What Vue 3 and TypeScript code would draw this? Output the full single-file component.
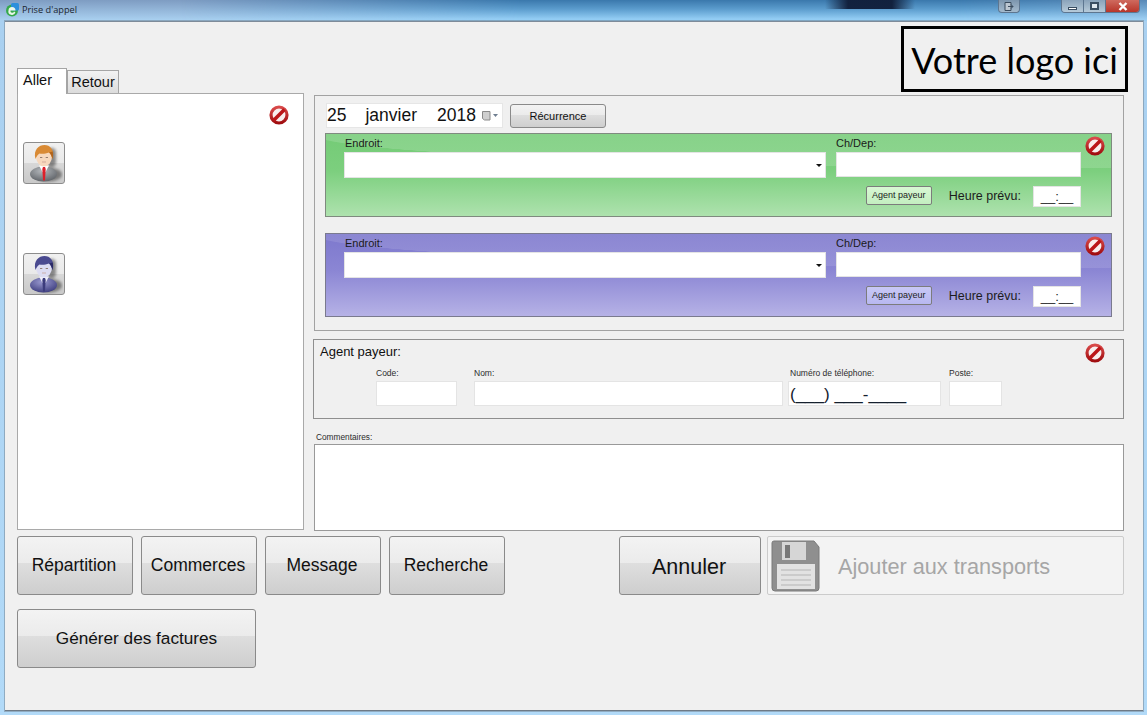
<script setup lang="ts">
interface Stop { cls: string }
const stops: Stop[] = [{ cls: 'green' }, { cls: 'purple' }]
const people = [
  { id: 'a', hair: '#d98a34', hairDark: '#b2651d', skin: '#f7d8bd', suit: '#b4b8bc', suitDark: '#5c6065', shirt: '#ffffff', tie: '#dd1f2a', gap: 'first' },
  { id: 'b', hair: '#4a4a90', hairDark: '#2b2b68', skin: '#dcdcf2', suit: '#9a9ad0', suitDark: '#3a3a7c', shirt: '#eeeefa', tie: '#3c3c7c', gap: 'second' },
]
const bottomLeft = ['Répartition', 'Commerces', 'Message', 'Recherche']
</script>

<template>
  <div class="desktop">
    <header class="titlebar">
      <svg class="app-icon" width="15" height="15" viewBox="0 0 15 15">
        <circle cx="7" cy="8.500" r="6" fill="#35a94b" />
        <rect x="6" y="1" width="8" height="7.500" rx="1.500" fill="#2c8fdc" />
        <path d="M3.500 8.500a3.500 3.500 0 0 1 7 0H5.500a1.800 1.800 0 0 0 3.500 1l1.400.8A3.500 3.500 0 0 1 3.500 8.500z" fill="#eaf7ea" />
      </svg>
      <span class="title">Prise d'appel</span>
      <div class="spacer"></div>
      <div class="cap helper">
        <svg width="10" height="9" viewBox="0 0 10 9">
          <path d="M1 .5h6v8H1z" fill="#bcc6d0" stroke="#3b4c5e" />
          <path d="M4 4.500h5M7 2.500l2 2-2 2" fill="none" stroke="#3b4c5e" />
        </svg>
      </div>
      <div class="caps">
        <div class="cap-b"><span class="min-glyph"></span></div>
        <div class="cap-b"><span class="max-glyph"></span></div>
        <div class="cap-b close">
          <svg width="10" height="9" viewBox="0 0 10 9">
            <path d="M1.500 1l7 7M8.500 1l-7 7" stroke="#fff" stroke-width="2.400" />
          </svg>
        </div>
      </div>
    </header>

    <main class="client">
      <div class="logo">Votre logo ici</div>

      <div class="columns">
        <section class="left">
          <div class="tabs">
            <div class="tab active">Aller</div>
            <div class="tab">Retour</div>
          </div>
          <div class="tab-panel">
            <svg class="ban left-ban" width="20" height="20" viewBox="0 0 20 20">
              <use href="#ban-shape" />
            </svg>
            <button v-for="p in people" :key="p.id" class="person" :class="p.gap">
              <svg width="38" height="38" viewBox="0 0 38 38">
                <defs>
                  <radialGradient :id="'suit-' + p.id" cx=".45" cy=".3" r=".75">
                    <stop offset="0" :stop-color="p.suit" />
                    <stop offset="1" :stop-color="p.suitDark" />
                  </radialGradient>
                </defs>
                <g filter="url(#soft)" fill="#000" opacity=".42">
                  <ellipse cx="23" cy="29.500" rx="14" ry="7" />
                  <rect x="22" y="3" width="9" height="19" rx="4.500" />
                </g>
                <ellipse cx="18.500" cy="29" rx="13.500" ry="7.500" :fill="'url(#suit-' + p.id + ')'" />
                <path d="M14 20.500h10l-3.500 6.500h-3z" :fill="p.shirt" />
                <path d="M18 22h2l.7 2-.7 11.500h-2l-.7-11.500z" :fill="p.tie" />
                <ellipse cx="19" cy="11.500" rx="8" ry="10" :fill="p.skin" />
                <path d="M10.500 14C8 4.500 14 0 19.500 0s10.500 4.500 8 14c-.7-2.500-1.500-5-3.500-6.500-3.500 1.500-7.500 1.500-9.500 1-1.800 1.200-3 3-4 5.500z" :fill="p.hair" />
                <path d="M24 7.500c2 1.500 2.800 4 3.500 6.500.7-2.500.8-5 .2-7.500z" :fill="p.hairDark" />
                <path d="M15 12.500h2.300M20.700 12.500H23" stroke="#8a7468" stroke-width=".9" />
                <path d="M17 17h4" stroke="#c49c8c" stroke-width=".7" />
              </svg>
            </button>
          </div>
        </section>

        <section class="right">
          <div class="group trip">
            <div class="date-row">
              <div class="date">
                <span>25</span><span>janvier</span><span>2018</span>
                <span class="cal">
                  <svg width="17" height="11" viewBox="0 0 17 11">
                    <path d="M.5 1.500h7.500v8.500H2.500l-2-1.500z" fill="#cfcfcf" stroke="#8a8a8a" />
                    <path d="M11 4h5l-2.500 3z" fill="#6f7e90" />
                  </svg>
                </span>
              </div>
              <button class="btn recur">Récurrence</button>
            </div>

            <div v-for="s in stops" :key="s.cls" class="stop" :class="s.cls">
              <svg class="ban stop-ban" width="20" height="20" viewBox="0 0 20 20">
                <use href="#ban-shape" />
              </svg>
              <div class="stop-grid">
                <div class="f-place">
                  <label>Endroit:</label>
                  <div class="input combo"><i class="caret"></i></div>
                </div>
                <div class="f-room">
                  <label>Ch/Dep:</label>
                  <div class="input"></div>
                </div>
              </div>
              <div class="stop-foot">
                <button class="payer">Agent payeur</button>
                <span class="hour-label">Heure prévu:</span>
                <div class="input hour">__:__</div>
              </div>
            </div>
          </div>

          <div class="group agent">
            <svg class="ban agent-ban" width="20" height="20" viewBox="0 0 20 20">
              <use href="#ban-shape" />
            </svg>
            <div class="agent-title">Agent payeur:</div>
            <div class="agent-fields">
              <div class="fld code"><label>Code:</label><div class="input"></div></div>
              <div class="fld nom"><label>Nom:</label><div class="input"></div></div>
              <div class="fld tel"><label>Numéro de téléphone:</label><div class="input phone">(___) ___-____</div></div>
              <div class="fld poste"><label>Poste:</label><div class="input"></div></div>
            </div>
          </div>

          <label class="comment-label">Commentaires:</label>
          <div class="comment"></div>
        </section>
      </div>

      <div class="actions">
        <button v-for="b in bottomLeft" :key="b" class="btn act">{{ b }}</button>
        <button class="btn cancel">Annuler</button>
        <button class="add">
          <svg width="50" height="52" viewBox="0 0 50 52">
            <path d="M3 1h40l5 6v41a3 3 0 0 1-3 3H4a3 3 0 0 1-3-3V3a2 2 0 0 1 2-2z" fill="#8f8f8f" stroke="#7a7a7a" />
            <rect x="11" y="2" width="24" height="18" fill="#d6d6d6" />
            <rect x="14" y="5" width="5" height="13" fill="#787878" />
            <rect x="6" y="24" width="38" height="25" fill="#e2e2e2" />
            <path d="M10 30h30M10 35h30M10 40h30M10 45h30" stroke="#c4c4c4" stroke-width="1.500" />
          </svg>
          <span>Ajouter aux transports</span>
        </button>
      </div>
      <div class="actions second">
        <button class="btn act wide">Générer des factures</button>
      </div>
    </main>

    <svg class="defs" width="0" height="0">
      <defs>
        <filter id="soft" x="-30%" y="-30%" width="160%" height="160%">
          <feGaussianBlur stdDeviation="1.500" />
        </filter>
        <linearGradient id="ban-red" x1="0" y1="0" x2="0" y2="1">
          <stop offset="0" stop-color="#d94a4a" />
          <stop offset="1" stop-color="#a00d10" />
        </linearGradient>
        <g id="ban-shape">
          <circle cx="10" cy="10" r="8" fill="#f8eeee" stroke="url(#ban-red)" stroke-width="3.200" />
          <path d="M4.500 15.500L15.500 4.500" stroke="#bb1619" stroke-width="3.600" />
        </g>
      </defs>
    </svg>
  </div>
</template>

<style>
html, body { margin: 0; padding: 0; }
</style>

<style scoped>
.desktop {
  position: relative;
  width: 1147px;
  height: 715px;
  overflow: hidden;
  font-family: "Liberation Sans", Arial, sans-serif;
  color: #111;
  background: linear-gradient(180deg, #7e9cc2 0, #a9d0f0 20px, #b2daf8 100%);
}
.titlebar {
  position: relative;
  display: flex;
  align-items: flex-start;
  height: 21px;
  padding-left: 5px;
  box-sizing: border-box;
}
.titlebar::before {
  content: "";
  position: absolute;
  inset: 0;
  background:
    linear-gradient(90deg, rgba(16, 30, 58, 0) 825px, rgba(16, 30, 58, .97) 848px, rgba(16, 30, 58, .97) 892px, rgba(16, 30, 58, 0) 915px) 0 0 / 100% 9px no-repeat,
    linear-gradient(180deg, #3a78ac 0, #5b9ccd 9px, #93cdf4 19px);
  -webkit-mask-image: linear-gradient(90deg, transparent 180px, #000 520px, #000 960px, rgba(0, 0, 0, .55) 1147px);
  mask-image: linear-gradient(90deg, transparent 180px, #000 520px, #000 960px, rgba(0, 0, 0, .55) 1147px);
}
.titlebar > * { position: relative; }
.app-icon { margin-top: 2px; }
.title {
  margin: 4px 0 0 2px;
  font: 9.200px/12px "Open Sans", sans-serif;
  color: #1a2530;
}
.spacer { flex: 1; }
.cap, .caps {
  border: 1px solid #5d7690;
  border-top: 0;
  border-radius: 0 0 4px 4px;
  height: 13px;
  display: flex;
  box-sizing: border-box;
  overflow: hidden;
}
.helper {
  width: 22px;
  align-items: center;
  justify-content: center;
  background: linear-gradient(180deg, #7c95ad, #a4bacd);
  margin-right: 41px;
}
.caps { margin-right: 7px; }
.cap-b {
  width: 22px;
  display: flex;
  align-items: center;
  justify-content: center;
  background: linear-gradient(180deg, #8aa3ba, #b6cad9);
  border-right: 1px solid #5d7690;
  box-sizing: border-box;
}
.min-glyph { width: 9px; height: 3px; margin-top: 4px; background: #fff; border: 1px solid #3a4e62; box-sizing: border-box; }
.max-glyph { width: 9px; height: 8px; background: #dfe7ee; border: 2px solid #3a4e62; box-sizing: border-box; }
.close {
  width: 33px;
  border-right: 0;
  background: linear-gradient(180deg, #cf6a5e, #b8362a);
}
.client {
  position: relative;
  height: 690px;
  margin: 0 4px 0 5px;
  box-sizing: border-box;
  padding: 46px 18px 0 12px;
  background: #f0f0f0;
  border-top: 1px solid #7e8b99;
  border-bottom: 1px solid #6e7a86;
  box-shadow: 0 0 0 1px rgba(110, 125, 140, .5);
}
.logo {
  position: absolute;
  left: 896px;
  top: 4px;
  width: 227px;
  height: 66px;
  box-sizing: border-box;
  border: 3px solid #000;
  background: #f0f0f0;
  color: #000;
  font: 36px/62px Lato, sans-serif;
  text-align: center;
  white-space: nowrap;
  z-index: 2;
}
.columns { display: flex; gap: 10px; }
.left { width: 287px; flex: none; }
.tabs { display: flex; align-items: flex-end; height: 25px; }
.tab {
  width: 52px;
  height: 23px;
  box-sizing: border-box;
  border: 1px solid #a5a5a5;
  border-bottom: 0;
  font-size: 14.500px;
  line-height: 22px;
  text-align: center;
  background: linear-gradient(180deg, #f2f2f2 0, #dcdcdc 100%);
}
.tab.active {
  width: 50px;
  height: 26px;
  background: #fff;
  z-index: 1;
  line-height: 22px;
  text-align: left;
  padding-left: 5px;
  margin-bottom: -1px;
}
.tab-panel {
  height: 437px;
  box-sizing: border-box;
  border: 2px solid #a9a9a9;
  border-width: 1px 1.500px 1.500px 1.500px;
  background: #fff;
  display: flex;
  flex-direction: column;
  align-items: flex-start;
  padding: 11px 0 0 5px;
}
.ban { display: block; flex: none; }
.left-ban { align-self: flex-end; margin-right: 14px; }
.person {
  width: 42px;
  height: 42px;
  padding: 2px 0 0;
  border: 1px solid #8d8d8d;
  border-radius: 3px;
  background: linear-gradient(180deg, #f1f1f1 0, #e9e9e9 50%, #d8d8d8 50%, #c9c9c9 100%);
  display: flex;
  justify-content: center;
  align-items: flex-start;
}
.person.first { margin-top: 17px; }
.person.second { margin-top: 69px; }
.right { width: 810px; flex: none; padding-top: 27px; }
.group {
  position: relative;
  border: 1px solid #a2a2a2;
  box-sizing: border-box;
}
.trip {
  height: 236px;
  padding: 7px 11px 0 11px;
}
.date-row { display: flex; gap: 7px; align-items: flex-start; }
.date {
  width: 177px;
  height: 25px;
  box-sizing: border-box;
  background: #fff;
  border: 1px solid #e6e6e6;
  display: flex;
  align-items: center;
  font-size: 17.500px;
  padding-left: 0;
  white-space: nowrap;
}
.date span:nth-child(2) { margin-left: 19px; }
.date span:nth-child(3) { margin-left: 20px; }
.cal { margin-left: 6px; display: flex; }
.btn {
  font-family: "Liberation Sans", Arial, sans-serif;
  color: #111;
  border: 1px solid #8a8a8a;
  border-radius: 3px;
  background: linear-gradient(180deg, #f3f3f3 0, #ebebeb 46%, #dedede 46%, #cecece 100%);
  padding: 0;
}
.recur { width: 96px; height: 24px; margin-top: 1px; font-size: 11px; }
.stop {
  position: relative;
  width: 787px;
  height: 84px;
  box-sizing: border-box;
  border: 1px solid #7f8a7f;
  margin: 5px 0 0 -1px;
  padding: 3px 31px 0 18px;
}
.stop + .stop { margin-top: 16px; }
.green {
  background:
    radial-gradient(ellipse 800px 34px at 100% 0, rgba(255, 255, 255, .14) 99.400%, rgba(255, 255, 255, 0) 100%),
    linear-gradient(180deg, #74cb76 0, #7ccf7e 45%, #aee2ae 100%);
}
.purple {
  background:
    radial-gradient(ellipse 800px 34px at 100% 0, rgba(255, 255, 255, .11) 99.400%, rgba(255, 255, 255, 0) 100%),
    linear-gradient(180deg, #7d78cd 0, #8b86d4 45%, #b6b2e6 100%);
  border-color: #7a7a8e;
}
.stop-ban { position: absolute; right: 6px; top: 2px; }
.stop-grid { display: grid; grid-template-columns: 482px 245px; column-gap: 10px; }
.stop label {
  display: block;
  font-size: 11px;
  line-height: 12px;
  margin-left: 1px;
  color: #1a1a1a;
}
.f-room label { margin-left: 0; }
.f-room .input { margin-top: 3px; height: 25px; }
.f-place .input { margin-top: 3px; height: 26px; }
.input {
  background: #fff;
  box-sizing: border-box;
  border: 1px solid #e4e4e4;
}
.combo { position: relative; }
.caret {
  position: absolute;
  right: 3px;
  top: 11px;
  border: 3px solid transparent;
  border-top: 3px solid #111;
  border-bottom: 0;
}
.stop-foot {
  display: flex;
  align-items: flex-start;
  justify-content: flex-end;
  width: 737px;
  margin-top: 8px;
}
.payer {
  width: 66px;
  height: 19px;
  padding: 0;
  font: 9px/1 "Liberation Sans", sans-serif;
  color: #222;
  border: 1px solid #7c7c7c;
  border-radius: 2px;
}
.green .payer { background: linear-gradient(180deg, #d9f7d4, #c3efc0); }
.purple .payer { background: linear-gradient(180deg, #c8c8f6, #b8b8f0); }
.hour-label { margin: 2px 12px 0 17px; font-size: 12.500px; line-height: 17px; color: #1c1c1c; }
.hour {
  width: 48px;
  height: 21px;
  font: 13px/19px "Liberation Sans", sans-serif;
  text-align: center;
  color: #222;
}
.agent {
  height: 80px;
  margin: 8px 0 0 -1px;
  width: 811px;
  padding: 3px 6px 0;
  border-color: #8f8f8f;
}
.agent-ban { position: absolute; right: 18px; top: 3px; }
.agent-title { font-size: 13px; line-height: 17px; }
.agent-fields { display: flex; margin: 7px 0 0 56px; }
.fld label { display: block; font-size: 8.500px; line-height: 12px; margin: 0 0 2px; color: #2c2c2c; }
.fld .input { height: 25px; margin-top: 0; }
.code { width: 81px; margin-right: 17px; }
.nom { width: 309px; margin-right: 5px; }
.tel { width: 153px; margin-right: 8px; }
.tel label { margin-left: 2px; }
.poste { width: 53px; }
.phone { font-size: 17px; line-height: 25px; padding-left: 1px; white-space: nowrap; color: #14202e; }
.comment-label {
  display: block;
  margin: 11px 0 0 2px;
  font-size: 8.300px;
  line-height: 14px;
  color: #2c2c2c;
}
.comment {
  height: 87px;
  background: #fff;
  box-sizing: border-box;
  border: 1px solid #999;
}
.actions { display: flex; margin-top: 5px; }
.act {
  width: 116px;
  height: 59px;
  margin-right: 8px;
  padding-right: 2px;
  font-size: 17.500px;
}
.cancel { width: 142px; height: 59px; margin-left: 106px; padding: 3px 2px 0 0; font-size: 21.500px; }
.add {
  width: 357px;
  height: 59px;
  margin-left: 6px;
  border: 1px solid #cbcbcb;
  border-radius: 2px;
  background: #f3f3f3;
  padding: 3px 0 0 3px;
  display: flex;
  align-items: flex-start;
  color: #a6a6a6;
  font: 21.700px "Liberation Sans", sans-serif;
}
.add span { margin: 14px 0 0 17px; }
.second { margin-top: 14px; }
.wide { width: 239px; font-size: 17.200px; padding-right: 0; }
.defs { position: absolute; }
</style>
